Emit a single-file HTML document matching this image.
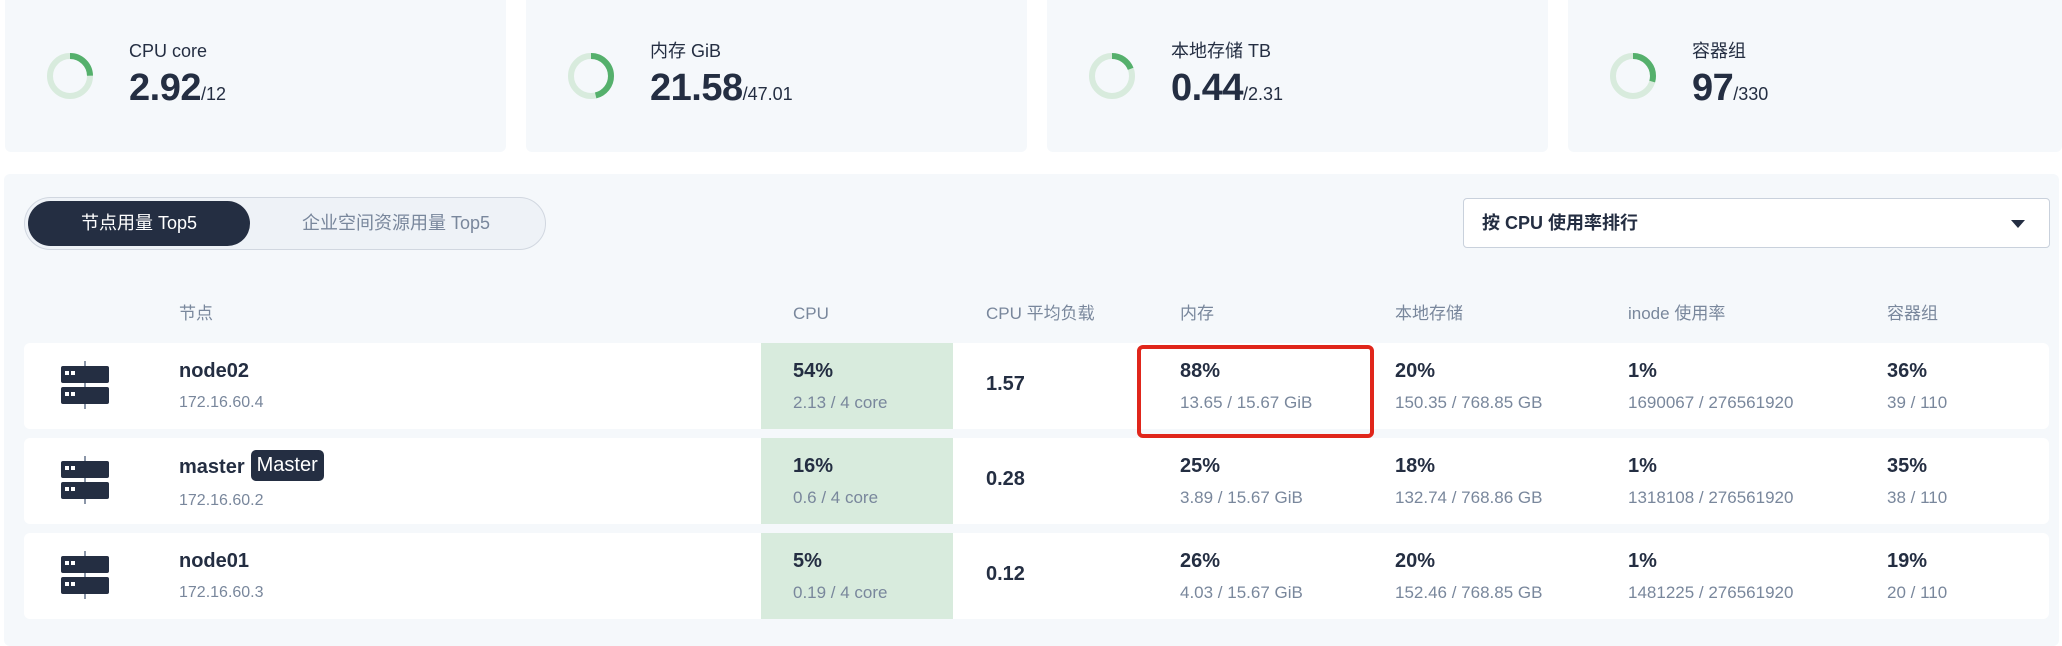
<!DOCTYPE html>
<html><head><meta charset="utf-8">
<style>
*{box-sizing:border-box;margin:0;padding:0}
body{width:2062px;height:646px;background:#fff;font-family:"Liberation Sans","Noto Sans CJK SC",sans-serif;color:#242e42;position:relative;overflow:hidden}
.card{position:absolute;top:0;height:152px;background:#f5f8fb;border-radius:0 0 6px 6px}
.ring{position:absolute;left:40px;top:51px}
.lbl{position:absolute;left:124px;top:40px;font-size:18px;line-height:22px;color:#242e42}
.val{position:absolute;left:124px;top:66px;font-size:38px;line-height:44px;font-weight:bold;color:#242e42;letter-spacing:-0.5px}
.val small{font-size:18px;font-weight:normal;letter-spacing:0}
.panel{position:absolute;left:4px;top:174px;width:2055px;height:472px;background:#f5f8fb;border-radius:6px}
.tabs{position:absolute;left:24px;top:197px;width:522px;height:53px;border:1px solid #d1d7e0;border-radius:27px;background:#eef2f7}
.tab1{position:absolute;left:3px;top:3px;width:222px;height:45px;border-radius:23px;background:#242e42;color:#fff;font-size:18px;line-height:45px;text-align:center}
.tab2{position:absolute;left:225px;top:3px;width:292px;height:45px;color:#79879c;font-size:18px;line-height:45px;text-align:center}
.sel{position:absolute;left:1463px;top:198px;width:587px;height:50px;border:1px solid #c9d1dc;border-radius:4px;background:#fff;font-size:18px;font-weight:bold;line-height:48px;padding-left:18px}
.sel:after{content:"";position:absolute;right:24px;top:21px;border-left:7px solid transparent;border-right:7px solid transparent;border-top:8px solid #242e42}
.th{position:absolute;top:302px;font-size:17px;line-height:24px;height:24px;color:#79879c}
.row{position:absolute;left:24px;width:2025px;height:86px;background:#fff;border-radius:6px}
.cpu{position:absolute;left:737px;top:0;width:192px;height:86px;background:#d8ebdd}
.c{position:absolute;top:14px}
.c b{display:block;font-size:20px;font-weight:bold;color:#242e42;line-height:28px}
.c > span{display:block;font-size:17px;color:#79879c;line-height:24px;margin-top:6px}
.one{position:absolute;top:30px;font-size:20px;font-weight:bold}
.nm{font-size:20px;font-weight:bold;line-height:28px;display:block;white-space:nowrap}
.c > span.ip{font-size:16px}
.tag{display:inline-block;background:#242e42;color:#fff;font-size:20px;font-style:normal;font-weight:normal;padding:0 6px;border-radius:5px;line-height:31px;height:31px;margin-left:6px;vertical-align:middle;position:relative;top:-2px}
.ic{position:absolute;left:36px;top:17px}
.red{position:absolute;left:1137px;top:345px;width:237px;height:93px;border:4px solid #e0261b;border-radius:6px}
</style></head><body>

<div class="card" style="left:5px;width:501px">
<svg class="ring" width="50" height="50" viewBox="0 0 50 50"><circle cx="25" cy="25" r="20" fill="none" stroke="#d8ebdd" stroke-width="6"/><circle cx="25" cy="25" r="20" fill="none" stroke="#55b06c" stroke-width="6" stroke-dasharray="31 126" transform="rotate(-90 25 25)"/></svg>
<div class="lbl">CPU core</div><div class="val">2.92<small>/12</small></div></div>

<div class="card" style="left:526px;width:501px">
<svg class="ring" width="50" height="50" viewBox="0 0 50 50"><circle cx="25" cy="25" r="20" fill="none" stroke="#d8ebdd" stroke-width="6"/><circle cx="25" cy="25" r="20" fill="none" stroke="#55b06c" stroke-width="6" stroke-dasharray="58 126" transform="rotate(-90 25 25)"/></svg>
<div class="lbl">内存 GiB</div><div class="val">21.58<small>/47.01</small></div></div>

<div class="card" style="left:1047px;width:501px">
<svg class="ring" width="50" height="50" viewBox="0 0 50 50"><circle cx="25" cy="25" r="20" fill="none" stroke="#d8ebdd" stroke-width="6"/><circle cx="25" cy="25" r="20" fill="none" stroke="#55b06c" stroke-width="6" stroke-dasharray="24 126" transform="rotate(-90 25 25)"/></svg>
<div class="lbl">本地存储 TB</div><div class="val">0.44<small>/2.31</small></div></div>

<div class="card" style="left:1568px;width:494px">
<svg class="ring" width="50" height="50" viewBox="0 0 50 50"><circle cx="25" cy="25" r="20" fill="none" stroke="#d8ebdd" stroke-width="6"/><circle cx="25" cy="25" r="20" fill="none" stroke="#55b06c" stroke-width="6" stroke-dasharray="37 126" transform="rotate(-90 25 25)"/></svg>
<div class="lbl">容器组</div><div class="val">97<small>/330</small></div></div>

<div class="panel"></div>
<div class="tabs"><div class="tab1">节点用量 Top5</div><div class="tab2">企业空间资源用量 Top5</div></div>
<div class="sel">按 CPU 使用率排行</div>

<div class="th" style="left:179px">节点</div>
<div class="th" style="left:793px">CPU</div>
<div class="th" style="left:986px">CPU 平均负载</div>
<div class="th" style="left:1180px">内存</div>
<div class="th" style="left:1395px">本地存储</div>
<div class="th" style="left:1628px">inode 使用率</div>
<div class="th" style="left:1887px">容器组</div>

<div class="row" style="top:343px">
<svg class="ic" width="50" height="50" viewBox="0 0 50 50"><rect x="24" y="1" width="2" height="48" fill="#8b96a8"/><rect x="1" y="6" width="48" height="17" rx="2" fill="#242e42"/><rect x="1" y="27" width="48" height="17" rx="2" fill="#242e42"/><rect x="5" y="11" width="4" height="4" fill="#fff"/><rect x="11" y="11" width="4" height="4" fill="#fff"/><rect x="5" y="32" width="4" height="4" fill="#fff"/><rect x="11" y="32" width="4" height="4" fill="#fff"/></svg>
<div class="c" style="left:155px"><b class="nm">node02</b><span class="ip">172.16.60.4</span></div>
<div class="cpu"></div>
<div class="c" style="left:769px"><b>54%</b><span>2.13 / 4 core</span></div>
<div class="one" style="left:962px">1.57</div>
<div class="c" style="left:1156px"><b>88%</b><span>13.65 / 15.67 GiB</span></div>
<div class="c" style="left:1371px"><b>20%</b><span>150.35 / 768.85 GB</span></div>
<div class="c" style="left:1604px"><b>1%</b><span>1690067 / 276561920</span></div>
<div class="c" style="left:1863px"><b>36%</b><span>39 / 110</span></div>
</div>

<div class="row" style="top:438px">
<svg class="ic" width="50" height="50" viewBox="0 0 50 50"><rect x="24" y="1" width="2" height="48" fill="#8b96a8"/><rect x="1" y="6" width="48" height="17" rx="2" fill="#242e42"/><rect x="1" y="27" width="48" height="17" rx="2" fill="#242e42"/><rect x="5" y="11" width="4" height="4" fill="#fff"/><rect x="11" y="11" width="4" height="4" fill="#fff"/><rect x="5" y="32" width="4" height="4" fill="#fff"/><rect x="11" y="32" width="4" height="4" fill="#fff"/></svg>
<div class="c" style="left:155px"><b class="nm">master<em class="tag">Master</em></b><span class="ip">172.16.60.2</span></div>
<div class="cpu"></div>
<div class="c" style="left:769px"><b>16%</b><span>0.6 / 4 core</span></div>
<div class="one" style="left:962px">0.28</div>
<div class="c" style="left:1156px"><b>25%</b><span>3.89 / 15.67 GiB</span></div>
<div class="c" style="left:1371px"><b>18%</b><span>132.74 / 768.86 GB</span></div>
<div class="c" style="left:1604px"><b>1%</b><span>1318108 / 276561920</span></div>
<div class="c" style="left:1863px"><b>35%</b><span>38 / 110</span></div>
</div>

<div class="row" style="top:533px">
<svg class="ic" width="50" height="50" viewBox="0 0 50 50"><rect x="24" y="1" width="2" height="48" fill="#8b96a8"/><rect x="1" y="6" width="48" height="17" rx="2" fill="#242e42"/><rect x="1" y="27" width="48" height="17" rx="2" fill="#242e42"/><rect x="5" y="11" width="4" height="4" fill="#fff"/><rect x="11" y="11" width="4" height="4" fill="#fff"/><rect x="5" y="32" width="4" height="4" fill="#fff"/><rect x="11" y="32" width="4" height="4" fill="#fff"/></svg>
<div class="c" style="left:155px"><b class="nm">node01</b><span class="ip">172.16.60.3</span></div>
<div class="cpu"></div>
<div class="c" style="left:769px"><b>5%</b><span>0.19 / 4 core</span></div>
<div class="one" style="left:962px">0.12</div>
<div class="c" style="left:1156px"><b>26%</b><span>4.03 / 15.67 GiB</span></div>
<div class="c" style="left:1371px"><b>20%</b><span>152.46 / 768.85 GB</span></div>
<div class="c" style="left:1604px"><b>1%</b><span>1481225 / 276561920</span></div>
<div class="c" style="left:1863px"><b>19%</b><span>20 / 110</span></div>
</div>

<div class="red"></div>
</body></html>
